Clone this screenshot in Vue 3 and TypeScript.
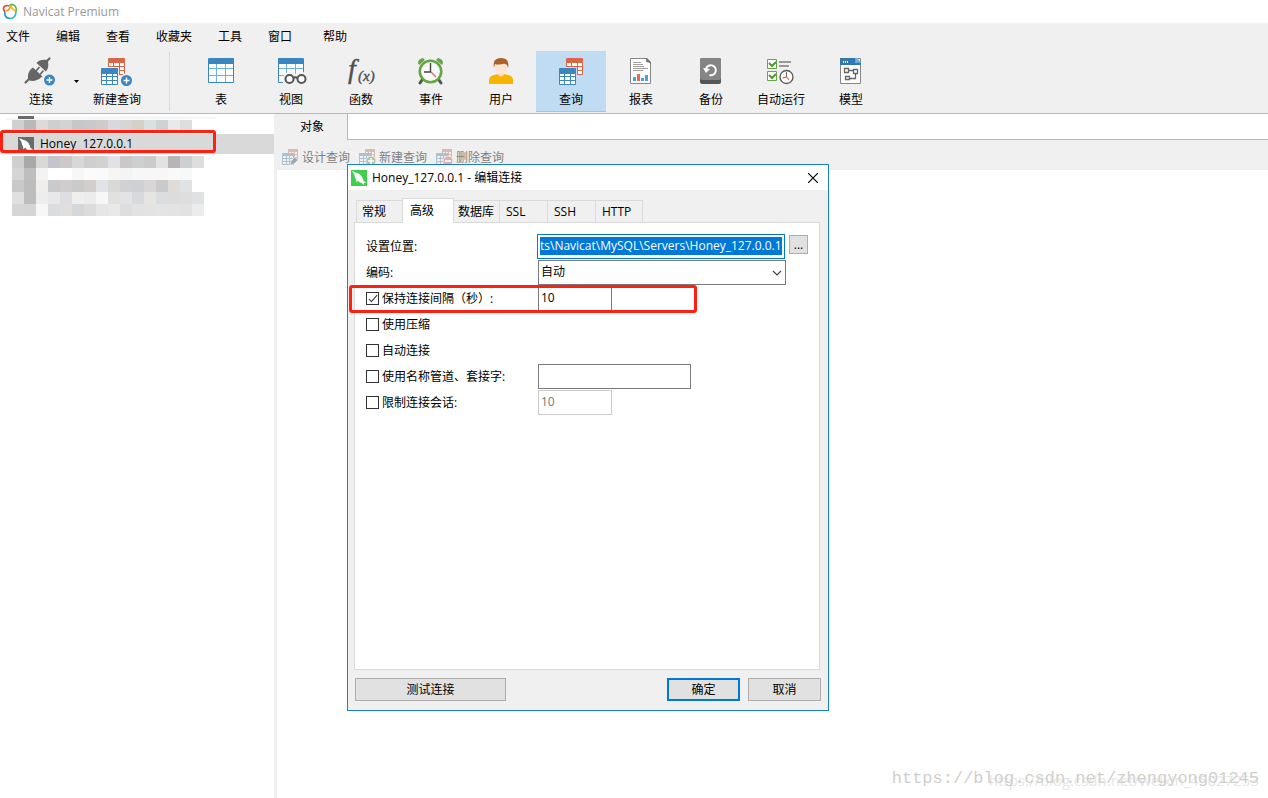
<script setup lang="ts">
import { onMounted, ref } from 'vue'

const menus = ['文件', '编辑', '查看', '收藏夹', '工具', '窗口', '帮助']

const tools = [
  { icon: 'table', label: '表' },
  { icon: 'view', label: '视图' },
  { icon: 'func', label: '函数' },
  { icon: 'event', label: '事件' },
  { icon: 'user', label: '用户' },
  { icon: 'query', label: '查询', active: true },
  { icon: 'report', label: '报表' },
  { icon: 'backup', label: '备份' },
  { icon: 'auto', label: '自动运行' },
  { icon: 'model', label: '模型' },
]

const queryActions = [
  { icon: 'small-design', label: '设计查询' },
  { icon: 'small-new', label: '新建查询' },
  { icon: 'small-delete', label: '删除查询' },
]

const tabs = [
  { label: '常规', cls: 'normal' },
  { label: '高级', cls: 'active' },
  { label: '数据库', cls: 'tight' },
  { label: 'SSL', cls: 'normal' },
  { label: 'SSH', cls: 'normal' },
  { label: 'HTTP', cls: 'normal' },
]

const maskTop = ['d0d0d0 b9b9b9 dfdad8 cfcfd0 d3d3d3 c8c6c8 c9c8cb cfcbcb d8d8e0 d6d6d6 d5d1c9 d9e0e2 cfd2d4 e9e9e9 dedede'].map((r) => r.split(' '))
const maskRows = [
  'cfcfcf a9a9a9 d9d9d5 c5c4cd cfc8c8 d8d8d8 cfcfcf d2d2d2 e2e2e6 cac8c8 cdd0d0 cbcbcb e2e2e4 b9b4b6 ccd0d2 dedede',
  'd5d5d5 bebebe f3f3f3 ffffff ffffff f7f7f7 fcfbf9 fafafa f8f5f3 f3f5f4 f7f7f7 f7f7f9 f9f7f6 f9f9f9 f8f8f8',
  'c9c9c9 bdbdbd efeeec c9cacd d1cdcd cacaca d2cecd e2e3e7 d9d9d7 d1d1d3 cdd1d5 d9d7d5 c8cacc dfdbd6 dfe3e6',
  'e0e0e2 bdbdbd ededed e8e8e8 dedee2 f0efed ececec f7f7f7 e1e1df e3e3e5 d7d9de e7e5e3 dadde1 dcdcdc dedede dfe1e4',
  'd6d6d6 d5d5d5 f7f6f8 dadde0 e0dfdd d5d8db dcdcdc e6e6e6 e9e9e9 dedede e2e2e2 e3e3e5 e4e4e4 e3e3e3 e2e2e2 ececec',
].map((r) => r.split(' '))

const location = ref('ts\\Navicat\\MySQL\\Servers\\Honey_127.0.0.1')
const locationInput = ref<HTMLInputElement | null>(null)
const keepAlive = ref(true)
const keepAliveSeconds = ref('10')
const compress = ref(false)
const autoConnect = ref(false)
const usePipe = ref(false)
const pipeName = ref('')
const limitSessions = ref(false)
const sessionCount = ref('10')

onMounted(() => {
  const el = locationInput.value
  if (el) el.scrollLeft = el.scrollWidth
})
</script>

<template>
  <svg class="sprite" aria-hidden="true">
    <defs>
      <symbol id="grid-blue" viewBox="0 0 17 17">
        <rect width="17" height="17" rx="1" fill="#3b85c0" />
        <path d="M1 6h4v2H1zM6 6h5v2H6zM12 6h4v2h-4zM1 9h4v3H1zM6 9h5v3H6zM12 9h4v3h-4zM1 13h4v3H1zM6 13h5v3H6zM12 13h4v3h-4z" fill="#fff" />
      </symbol>
      <symbol id="grid-red" viewBox="0 0 17 17">
        <rect width="17" height="17" rx="1" fill="#dc6547" />
        <path d="M1 5h4v3H1zM6 5h5v3H6zM12 5h4v3h-4zM1 9h4v3H1zM6 9h5v3H6zM12 9h4v3h-4zM1 13h4v3H1zM6 13h5v3H6zM12 13h4v3h-4z" fill="#fff" />
      </symbol>
      <symbol id="plus" viewBox="0 0 12 12">
        <circle cx="6" cy="6" r="5.5" fill="#3b85c0" />
        <path d="M3 6h6M6 3v6" stroke="#fff" stroke-width="1.4" />
      </symbol>
      <symbol id="plug" viewBox="0 0 40 32">
        <path d="M4.500 26.500 8 23M26 5l2.500-2.500" stroke="#666" stroke-width="2.200" stroke-linecap="round" />
        <path d="M12 11.500 21.500 20.500 20 21.500C17 24.500 12 25.500 8.500 24.500L7 23C6.500 19 7.500 15 10.500 12.500Z" fill="#666" />
        <path d="M15 15l3.500-4M19 18.500l3.500-4" stroke="#666" stroke-width="1.700" />
        <path d="M15.500 7 25 15.500 26 14C27.500 11.500 27.500 8 27 5.500L25.500 4C22 3.500 18.500 4 16.500 6Z" fill="#666" />
        <use href="#plus" x="22.500" y="18" width="12" height="12" />
      </symbol>
      <symbol id="newquery" viewBox="0 0 40 32">
        <use href="#grid-red" x="11" y="2" width="17" height="17" />
        <rect x="3" y="11" width="19" height="19" fill="#f0f0f0" />
        <use href="#grid-blue" x="4" y="12" width="17" height="17" />
        <circle cx="29.500" cy="24.500" r="7" fill="#f0f0f0" />
        <use href="#plus" x="23.500" y="18.500" width="12" height="12" />
      </symbol>
      <symbol id="table" viewBox="0 0 40 32">
        <rect x="7" y="2" width="26" height="25" rx="1" fill="#3b85c0" />
        <path d="M8 8h24v18H8z" fill="#6db1e8" />
        <path d="M8 8h7v4H8zM16 8h8v4h-8zM25 8h7v4h-7zM8 13h7v6H8zM16 13h8v6h-8zM25 13h7v6h-7zM8 20h7v6H8zM16 20h8v6h-8zM25 20h7v6h-7z" fill="#fff" />
      </symbol>
      <symbol id="view" viewBox="0 0 40 32">
        <use href="#table" width="40" height="32" />
        <path d="M12 22q1-6 7-6 4 0 6 2 2-2 6-2 4 0 5 5v7H12z" fill="#f0f0f0" />
        <circle cx="18.500" cy="23" r="4" fill="#fff" stroke="#555" stroke-width="2" />
        <circle cx="30.500" cy="23" r="4" fill="#fff" stroke="#555" stroke-width="2" />
        <path d="M22.500 22q2-1.500 4 0" stroke="#555" stroke-width="2" fill="none" />
      </symbol>
      <symbol id="func" viewBox="0 0 40 32">
        <text x="7" y="22" font-family="Liberation Serif, serif" font-style="italic" font-size="28" fill="#505050" stroke="#505050" stroke-width=".4">f</text>
        <text x="17" y="25" font-family="Liberation Serif, serif" font-style="italic" font-size="15" fill="#505050" stroke="#505050" stroke-width=".4">(x)</text>
      </symbol>
      <symbol id="event" viewBox="0 0 40 32">
        <path d="M7 7q0-4 5-5l2 2-6 5zM32 7q0-4-5-5l-2 2 6 5z" fill="#62a744" />
        <path d="m11 24-2 3M28 24l2 3" stroke="#555" stroke-width="3" stroke-linecap="round" />
        <circle cx="19.500" cy="15.500" r="10.700" fill="#fafafa" stroke="#62a744" stroke-width="2.600" />
        <path d="M19.500 7v9H13" stroke="#444" stroke-width="1.400" fill="none" />
        <path d="m20 16 5 5" stroke="#e8674e" stroke-width="1.200" />
      </symbol>
      <symbol id="user" viewBox="0 0 40 32">
        <path d="M8 28v-4q0-4 5-5l4-1h6l4 1q5 1 5 5v4z" fill="#f7b500" />
        <path d="M17 15h6v4q-3 3-6 0z" fill="#f8d9c7" />
        <ellipse cx="20" cy="11" rx="6" ry="7.500" fill="#fde4d5" />
        <path d="M13 12q-2-10 7-10t7 10l-1-3q-2-2-5-1-4 1-7 0z" fill="#aa622b" />
      </symbol>
      <symbol id="query" viewBox="0 0 40 32">
        <use href="#grid-red" x="15" y="2" width="17" height="17" />
        <rect x="7" y="11" width="19" height="19" fill="#c0dcf3" />
        <use href="#grid-blue" x="8" y="12" width="17" height="17" />
      </symbol>
      <symbol id="report" viewBox="0 0 40 32">
        <path d="M9.500 2.500h16l4 4v21h-20z" fill="#fff" stroke="#888" />
        <path d="M24 2h2l4 4v2q-2-2-5-2 1-2-1-4" fill="#777" />
        <path d="M12 6.500h8M12 8.500h10M12 10.500h11M12 12.500h15M12 14.500h10" stroke="#888" stroke-width=".8" />
        <path d="M12 21h3v4h-3zM20 22h3v3h-3zM24 19h3v6h-3z" fill="#4da0e0" />
        <path d="M16 18h3v7h-3z" fill="#e8674e" />
      </symbol>
      <symbol id="backup" viewBox="0 0 40 32">
        <rect x="9" y="2" width="21" height="26" rx="2" fill="#555" />
        <rect x="9" y="2" width="21" height="22" rx="2" fill="#858585" />
        <path d="M15 13a5 5 0 1 1 3.500 6" fill="none" stroke="#fff" stroke-width="2" />
        <path d="m12 12 3 5 4-4z" fill="#fff" />
      </symbol>
      <symbol id="auto" viewBox="0 0 40 32">
        <path d="M6.500 3.500h9v9h-9zM6.500 15.500h9v9h-9z" fill="#fff" stroke="#62a744" />
        <path d="m8 7 3 3 4-4M8 19l3 3 4-4" fill="none" stroke="#4f9733" stroke-width="2" />
        <path d="M18 6h12M18 10h10" stroke="#999" stroke-width="2" />
        <circle cx="25.500" cy="21" r="6.500" fill="#fff" stroke="#555" stroke-width="1.300" />
        <path d="M25.500 16v5l-4 1" fill="none" stroke="#666" />
        <path d="m25 20 3 4" stroke="#e8674e" stroke-width="1.200" />
      </symbol>
      <symbol id="model" viewBox="0 0 40 32">
        <path d="M9.500 2.500h20v25h-20z" fill="#fff" stroke="#888" />
        <path d="M9 2h16l5 5v2H9z" fill="#3478b0" />
        <path d="M24 2h2l4 4v1q-3-1-6 0 1-3 0-5" fill="#6bb5ee" />
        <path d="M12 5h1v2h-1zM14 5h1v2h-1zM16 5h1v2h-1z" fill="#fff" />
        <path d="M13.500 12.500h4v4h-4zM22.500 13.500h4v4h-4zM14.500 20.500h4v3h-4zM17.500 14.500h5M24.500 17.500v5h-6" fill="none" stroke="#666" stroke-width="1.300" />
      </symbol>
      <symbol id="small-base" viewBox="0 0 17 17">
        <rect x="6" y="0" width="10" height="11" fill="#dcb9b2" />
        <path d="M7 3h2v2H7zM10 3h2v2h-2zM13 3h2v2h-2zM13 6h2v2h-2zM13 9h2v1h-2z" fill="#f0f0f0" />
        <rect x="0" y="4" width="12" height="12" fill="#adc1d0" />
        <path d="M1 7h3v2H1zM5 7h2v2H5zM8 7h3v2H8zM1 10h3v2H1zM5 10h2v2H5zM8 10h3v2H8zM1 13h3v2H1zM5 13h2v2H5zM8 13h3v2H8z" fill="#f0f0f0" />
      </symbol>
      <symbol id="small-design" viewBox="0 0 17 17">
        <use href="#small-base" width="17" height="17" />
        <path d="m8 16 1-4 4-4 3 3-4 4z" fill="#9aabb8" stroke="#f0f0f0" stroke-width=".6" />
      </symbol>
      <symbol id="small-new" viewBox="0 0 17 17">
        <use href="#small-base" width="17" height="17" />
        <circle cx="12" cy="12" r="4.800" fill="#aec6a2" stroke="#f0f0f0" stroke-width=".6" />
        <path d="M9 12h6M12 9v6" stroke="#fff" stroke-width="1.500" />
      </symbol>
      <symbol id="small-delete" viewBox="0 0 17 17">
        <use href="#small-base" width="17" height="17" />
        <circle cx="12" cy="12" r="4.800" fill="#dfb0b0" stroke="#f0f0f0" stroke-width=".6" />
        <path d="M9 12h6" stroke="#fff" stroke-width="1.500" />
      </symbol>
      <symbol id="dolphin" viewBox="0 0 16 16">
        <path d="M1 1 4.500 2.500Q8.500 3 10.500 6 12 8.500 12.500 11L15 12.500 13 13 12.500 15 11 13Q8.500 13 7 10.500L5.500 12.500 5 9.500Q3.500 7.500 3.500 5Z" fill="#fff" />
      </symbol>
    </defs>
  </svg>

  <div class="app">
    <header class="titlebar">
      <svg class="logo" width="16" height="17" viewBox="0 0 16 17" fill="none" stroke-width="1.700">
        <path d="M3 9Q0 5 3 3q2-1 4 0" stroke="#e5482d" />
        <path d="M7 3q3-3 6 0 2 3 1 5" stroke="#6bb845" />
        <path d="M4 8q4-1 5-6" stroke="#f59a23" />
        <path d="M9 4q2 3 5 4" stroke="#f5b324" />
        <path d="M3 9q-1 6 5 6.500" stroke="#2d8fdd" />
        <path d="M8 15.500q6 0 6-7.500" stroke="#35c2b2" />
      </svg>
      <span>Navicat Premium</span>
    </header>

    <nav class="menubar">
      <button v-for="m in menus" :key="m" type="button">{{ m }}</button>
    </nav>

    <div class="toolbar">
      <button type="button" class="tool connect">
        <svg width="40" height="32"><use href="#plug" /></svg>
        <span>连接</span>
      </button>
      <button type="button" class="dropdown" aria-label="展开">
        <svg width="5" height="3" viewBox="0 0 5 3"><path d="M0 0h5L2.500 3z" fill="#000" /></svg>
      </button>
      <button type="button" class="tool">
        <svg width="40" height="32"><use href="#newquery" /></svg>
        <span>新建查询</span>
      </button>
      <i class="divider"></i>
      <button v-for="t in tools" :key="t.icon" type="button" class="tool" :class="{ active: t.active }">
        <svg width="40" height="32"><use :href="'#' + t.icon" /></svg>
        <span>{{ t.label }}</span>
      </button>
    </div>

    <div class="main">
      <aside class="sidebar">
        <svg class="mask" width="216" height="20">
          <path d="M6 4Q100 1 216 3v2L6 6z" fill="#f5f5f5" />
          <rect x="18" y="2" width="16" height="3" fill="#6b6b6b" />
          <template v-for="(row, r) in maskTop" :key="r">
            <rect v-for="(c, i) in row" :key="i" :x="12 + i * 12" y="6" width="12" height="12" :fill="'#' + c" />
          </template>
        </svg>
        <a class="node" href="#">
          <svg class="node-icon" width="16" height="14" viewBox="0 0 16 14"><rect width="16" height="14" fill="#6b6b6b" /><use href="#dolphin" width="16" height="16" /></svg>
          <span>Honey&nbsp; 127.0.0.1</span>
          <i class="mark"></i>
        </a>
        <svg class="mask" width="216" height="62">
          <template v-for="(row, r) in maskRows" :key="r">
            <rect v-for="(c, i) in row" :key="i" :x="12 + i * 12" :y="r * 12 + 2" width="12" height="12" :fill="'#' + c" />
          </template>
        </svg>
      </aside>

      <section class="content">
        <div class="doc-tabs">
          <button type="button" class="doc-tab">对象</button>
          <div class="doc-rest"></div>
        </div>
        <div class="actions">
          <button v-for="a in queryActions" :key="a.icon" type="button" disabled>
            <svg width="17" height="17"><use :href="'#' + a.icon" /></svg>
            <span>{{ a.label }}</span>
          </button>
        </div>
        <div class="canvas"></div>
      </section>
    </div>

    <form class="dialog" role="dialog" aria-labelledby="dialog-title" @submit.prevent>
      <div class="dialog-title">
        <svg width="16" height="16" viewBox="0 0 16 16"><rect width="16" height="16" fill="#3fcf4f" /><use href="#dolphin" width="16" height="16" /></svg>
        <span id="dialog-title">Honey_127.0.0.1 - 编辑连接</span>
        <button type="button" class="close" aria-label="关闭">
          <svg width="10" height="10" viewBox="0 0 10 10"><path d="m0 0 10 10M10 0 0 10" stroke="#000" stroke-width="1.200" /></svg>
        </button>
      </div>

      <div class="tabs" role="tablist">
        <button v-for="t in tabs" :key="t.label" type="button" role="tab" :aria-selected="t.cls === 'active'" :class="t.cls">{{ t.label }}</button>
      </div>

      <div class="panel">
        <div class="row">
          <label for="loc">设置位置:</label>
          <div class="location"><input id="loc" ref="locationInput" v-model="location" type="text" /></div>
          <button type="button" class="browse">...</button>
        </div>
        <div class="row">
          <label for="enc">编码:</label>
          <div class="select">
            <select id="enc"><option>自动</option></select>
            <svg width="10" height="6" viewBox="0 0 10 6"><path d="m1 1 4 4 4-4" fill="none" stroke="#444" stroke-width="1.200" /></svg>
          </div>
        </div>
        <div class="row">
          <label><input v-model="keepAlive" type="checkbox" />保持连接间隔（秒）:</label>
          <input v-model="keepAliveSeconds" class="field short" type="text" aria-label="保持连接间隔（秒）" />
          <i class="mark"></i>
        </div>
        <div class="row">
          <label><input v-model="compress" type="checkbox" />使用压缩</label>
        </div>
        <div class="row">
          <label><input v-model="autoConnect" type="checkbox" />自动连接</label>
        </div>
        <div class="row">
          <label><input v-model="usePipe" type="checkbox" />使用名称管道、套接字:</label>
          <input v-model="pipeName" class="field long" type="text" aria-label="使用名称管道、套接字" />
        </div>
        <div class="row">
          <label><input v-model="limitSessions" type="checkbox" />限制连接会话:</label>
          <input v-model="sessionCount" class="field short" type="text" aria-label="限制连接会话" disabled />
        </div>
      </div>

      <div class="footer">
        <button type="button" class="test">测试连接</button>
        <button type="submit" class="primary">确定</button>
        <button type="button">取消</button>
      </div>
    </form>

    <div class="watermark back">https://blog.csdn.net/weixin_45027253</div>
    <div class="watermark front">https://blog.csdn.net/zhengyong01245</div>
  </div>
</template>

<style>
body {
  margin: 0;
}
</style>

<style scoped>
.app,
button,
input,
select {
  font: 12px/18px "Open Sans", "Noto Sans CJK SC", sans-serif;
  color: #000;
}
.app {
  position: relative;
  display: flex;
  flex-direction: column;
  min-height: 100vh;
  background: #fff;
  overflow: hidden;
}
button {
  margin: 0;
  padding: 0;
  border: 0;
  background: none;
  white-space: nowrap;
}
*,
*::after {
  box-sizing: border-box;
}
.sprite {
  position: absolute;
  width: 0;
  height: 0;
}
.titlebar {
  display: flex;
  align-items: center;
  gap: 5px;
  height: 23px;
  padding-left: 2px;
  color: #999;
}
.menubar {
  display: flex;
  align-items: center;
  gap: 26px;
  height: 27px;
  padding-left: 6px;
  background: #f0f0f0;
}
.menubar button:last-child {
  margin-left: 5px;
}
.toolbar {
  display: flex;
  height: 64px;
  padding: 1px 0;
  background: #f0f0f0;
  border-bottom: 1px solid #b8b8b8;
}
.tool {
  display: flex;
  flex-direction: column;
  align-items: center;
  gap: 3px;
  width: 70px;
  padding-top: 5px;
}
.tool.connect {
  margin-left: 6px;
}
.tool.active {
  background: #c0dcf3;
  border-bottom: 1px solid #90c8f6;
}
.dropdown {
  display: flex;
  align-items: center;
  justify-content: flex-end;
  width: 12px;
  margin: 0 0 0 -9px;
}
.dropdown + .tool {
  margin-left: 3px;
}
.divider {
  width: 1px;
  margin: 1px 16px 1px 17px;
  background: #d9d9d9;
}
.main {
  display: flex;
  flex: 1;
}
.sidebar {
  width: 274px;
  flex-shrink: 0;
}
.mask {
  display: block;
}
.node {
  position: relative;
  display: flex;
  align-items: center;
  gap: 6px;
  height: 20px;
  padding-left: 18px;
  background: #d9d9d9;
  color: #000;
  text-decoration: none;
}
.mark {
  position: absolute;
  border: 3px solid #ff2012;
  border-radius: 3px;
  pointer-events: none;
}
.node .mark {
  left: 0;
  top: -4px;
  width: 216px;
  height: 23px;
}
.content {
  display: flex;
  flex: 1;
  flex-direction: column;
  border-left: 3px solid #f0f0f0;
}
.doc-tabs {
  display: flex;
  height: 26px;
  background: #f0f0f0;
}
.doc-tab {
  width: 70px;
}
.doc-rest {
  flex: 1;
  background: #fff;
  border-left: 1px solid #b8b8b8;
  border-bottom: 1px solid #b8b8b8;
}
.actions {
  display: flex;
  gap: 9px;
  height: 30px;
  padding: 5px 0 0 5px;
  background: #f0f0f0;
}
.actions button {
  display: flex;
  align-items: center;
  gap: 3px;
  color: #808080;
}
.dialog {
  position: absolute;
  left: 347px;
  top: 164px;
  width: 482px;
  background: #f0f0f0;
  border: 1px solid #1a80d0;
}
.dialog-title {
  display: flex;
  align-items: center;
  gap: 5px;
  height: 25px;
  padding: 0 10px 0 3px;
  background: #fff;
}
.close {
  display: flex;
  margin-left: auto;
}
.tabs {
  display: flex;
  align-items: flex-end;
  height: 32px;
  padding-left: 8px;
}
.tabs button {
  width: 48px;
  height: 22px;
  padding-left: 6px;
  border: 1px solid #dadada;
  border-width: 1px 1px 0 0;
  text-align: left;
}
.tabs button:first-child {
  width: 46px;
  padding-left: 5px;
  border-width: 1px 0 0 1px;
}
.tabs button:last-child {
  width: 47px;
}
.tabs .tight {
  width: 46px;
  padding-left: 4px;
}
.tabs .active {
  position: relative;
  width: 52px;
  height: 25px;
  margin-bottom: -1px;
  padding-left: 7px;
  border-width: 1px 1px 0;
  background: #fff;
}
.panel {
  display: flex;
  flex-direction: column;
  gap: 1px;
  min-height: 448px;
  margin: 0 8px 0 6px;
  padding: 11px;
  background: #fff;
  border: 1px solid #dadada;
}
.row {
  position: relative;
  display: flex;
  height: 25px;
}
.row label {
  display: flex;
  align-items: center;
  gap: 3px;
  width: 172px;
}
.row .mark {
  left: -17px;
  top: -1px;
  width: 348px;
  height: 28px;
}
.location {
  flex-shrink: 0;
  width: 248px;
  padding: 2px;
  border: 1px solid #0078d7;
}
.location input {
  display: block;
  width: 100%;
  height: 18px;
  padding: 0;
  border: 0;
  outline: 0;
  background: #0078d7;
  color: #fff;
}
.browse {
  flex-shrink: 0;
  width: 19px;
  height: 19px;
  margin: 1px 0 0 4px;
  background: #e1e1e1;
  border: 1px solid #adadad;
  line-height: 16px;
}
.select {
  position: relative;
  width: 248px;
}
.select select {
  display: block;
  width: 100%;
  height: 25px;
  padding: 0 20px 2px 2px;
  appearance: none;
  background: #fff;
  border: 1px solid #7a7a7a;
  border-radius: 0;
}
.select svg {
  position: absolute;
  right: 4px;
  top: 10px;
  pointer-events: none;
}
.field {
  height: 25px;
  padding: 0 2px 2px;
  background: #fff;
  border: 1px solid #7a7a7a;
  border-radius: 0;
}
.field:disabled {
  border-color: #ccc;
  color: #777;
}
.short {
  width: 74px;
}
.long {
  width: 153px;
}
input[type="checkbox"] {
  position: relative;
  width: 13px;
  height: 13px;
  margin: 0;
  appearance: none;
  background: #fff;
  border: 1px solid #333;
}
input[type="checkbox"]:checked::after {
  content: "";
  position: absolute;
  left: 4px;
  top: 0;
  width: 4px;
  height: 9px;
  border: solid #333;
  border-width: 0 1px 1px 0;
  transform: rotate(42deg);
}
.footer {
  display: flex;
  gap: 8px;
  padding: 8px 7px 9px;
}
.footer button {
  width: 73px;
  height: 23px;
  background: #e1e1e1;
  border: 1px solid #adadad;
}
.footer .test {
  width: 151px;
  margin-right: auto;
}
.footer .primary {
  border: 2px solid #0078d7;
}
.watermark {
  position: absolute;
  right: 9px;
  white-space: nowrap;
}
.watermark.front {
  bottom: 7px;
  font: 17px/24px "Liberation Mono", monospace;
  color: #d0d0cb;
}
.watermark.back {
  bottom: 6px;
  font: 15px/24px "Open Sans", sans-serif;
  color: #e6e6e6;
}
</style>
